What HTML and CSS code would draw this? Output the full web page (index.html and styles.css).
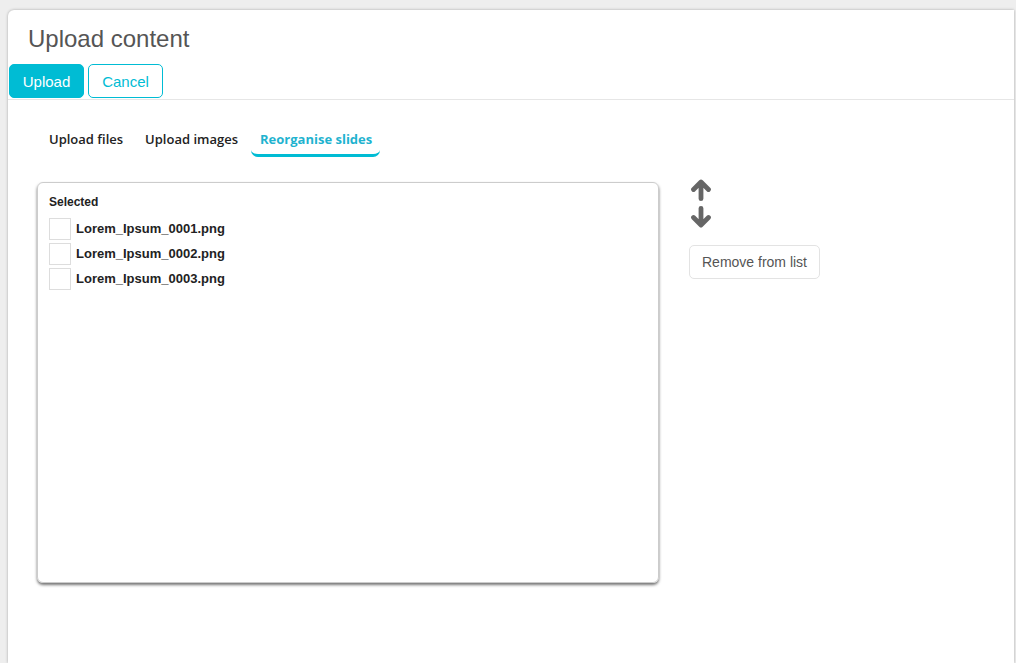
FILE: index.html
```html
<!DOCTYPE html>
<html lang="en">
<head>
    <meta charset="UTF-8">
    <title>Upload content</title>
    <link rel="stylesheet" href="styles.css">
</head>
<body>
<div class="panel">
    <div class="panel-header">
        <h2 class="title">Upload content</h2>
        <div class="actions">
            <button type="button" class="btn btn-primary">Upload</button>
            <button type="button" class="btn btn-outline">Cancel</button>
        </div>
    </div>

    <div class="panel-body">
        <ul class="tabs">
            <li class="tab">Upload files</li>
            <li class="tab">Upload images</li>
            <li class="tab active">Reorganise slides</li>
        </ul>

        <div class="reorder">
            <div class="list-box">
                <div class="list-title">Selected</div>
                <label class="list-item"><span class="check"></span>Lorem_Ipsum_0001.png</label>
                <label class="list-item"><span class="check"></span>Lorem_Ipsum_0002.png</label>
                <label class="list-item"><span class="check"></span>Lorem_Ipsum_0003.png</label>
            </div>

            <div class="controls">
                <!-- move up / move down -->
                <svg class="arrow" viewBox="0 0 24 24" width="24" height="23">
                    <path d="M12 20.5V4M4.2 11L12 3.2L19.8 11" fill="none" stroke="#666" stroke-width="5" stroke-linecap="round" stroke-linejoin="round"/>
                </svg>
                <svg class="arrow" viewBox="0 0 24 24" width="24" height="23">
                    <path d="M12 3.5V20M4.2 13L12 20.8L19.8 13" fill="none" stroke="#666" stroke-width="5" stroke-linecap="round" stroke-linejoin="round"/>
                </svg>
                <button type="button" class="btn btn-light">Remove from list</button>
            </div>
        </div>
    </div>
</div>
</body>
</html>
```

FILE: styles.css
```css
body {
    margin: 0;
    background-color: #eeeeee;
    font-family: "Liberation Sans", Arial, sans-serif;
}

*,
*::before,
*::after {
    box-sizing: border-box;
}

.panel {
    margin: 10px 2px 0 8px;
    height: 653px;
    background-color: #ffffff;
    border-radius: 6px 0 0 0;
    box-shadow: 0 0 3px rgba(0, 0, 0, 0.3);
}

.panel-header {
    padding-top: 15px;
    border-bottom: 1px solid #e6e6e6;
    padding-bottom: 1px;
}

.title {
    margin: 0 0 11px 20px;
    font-size: 24px;
    font-weight: normal;
    line-height: 28px;
    color: #555555;
}

.actions {
    display: flex;
    gap: 4px;
    padding-left: 1px;
}

.btn {
    font-family: "Liberation Sans", Arial, sans-serif;
    height: 34px;
    border-radius: 5px;
    font-size: 15px;
    cursor: pointer;
    background: #ffffff;
}

.btn-primary {
    width: 75px;
    background-color: #00bcd4;
    border: 1px solid #00bcd4;
    color: #ffffff;
}

.btn-outline {
    width: 75px;
    border: 1px solid #00bcd4;
    color: #00bcd4;
}

.btn-light {
    width: 131px;
    border: 1px solid #e3e3e3;
    color: #555555;
    font-size: 14px;
}

.panel-body {
    padding: 22px 0 0 29px;
}

.tabs {
    display: flex;
    gap: 4px;
    margin: 0;
    padding: 0 0 0 3px;
    list-style: none;
}

.tab {
    padding: 8px 9px 6px;
    border-bottom: 3px solid transparent;
    border-radius: 0 0 7px 7px;
    font-family: "Open Sans", sans-serif;
    font-size: 13px;
    font-weight: 600;
    line-height: 18px;
    color: #222222;
}

.tab.active {
    color: #1fb3cf;
    border-bottom-color: #00bcd4;
    font-weight: 700;
    padding-right: 8px;
}

.reorder {
    display: flex;
    align-items: flex-start;
    gap: 30px;
    margin-top: 25px;
}

.list-box {
    width: 622px;
    height: 401px;
    padding: 12px 11px;
    border: 1px solid #cccccc;
    border-radius: 6px;
    box-shadow: 0 2px 3px rgba(0, 0, 0, 0.55);
}

.list-title {
    font-size: 12px;
    font-weight: bold;
    line-height: 14px;
    color: #222222;
    margin-bottom: 7px;
}

.list-item {
    display: flex;
    align-items: center;
    gap: 5px;
    height: 25px;
    font-size: 13px;
    font-weight: bold;
    color: #222222;
}

.check {
    width: 22px;
    height: 22px;
    border: 1px solid #dddddd;
}

.controls {
    display: flex;
    flex-direction: column;
    align-items: flex-start;
    margin-top: -3px;
}

.arrow {
    display: block;
    margin-bottom: 3px;
}

.controls .btn-light {
    margin-top: 14px;
}
```
